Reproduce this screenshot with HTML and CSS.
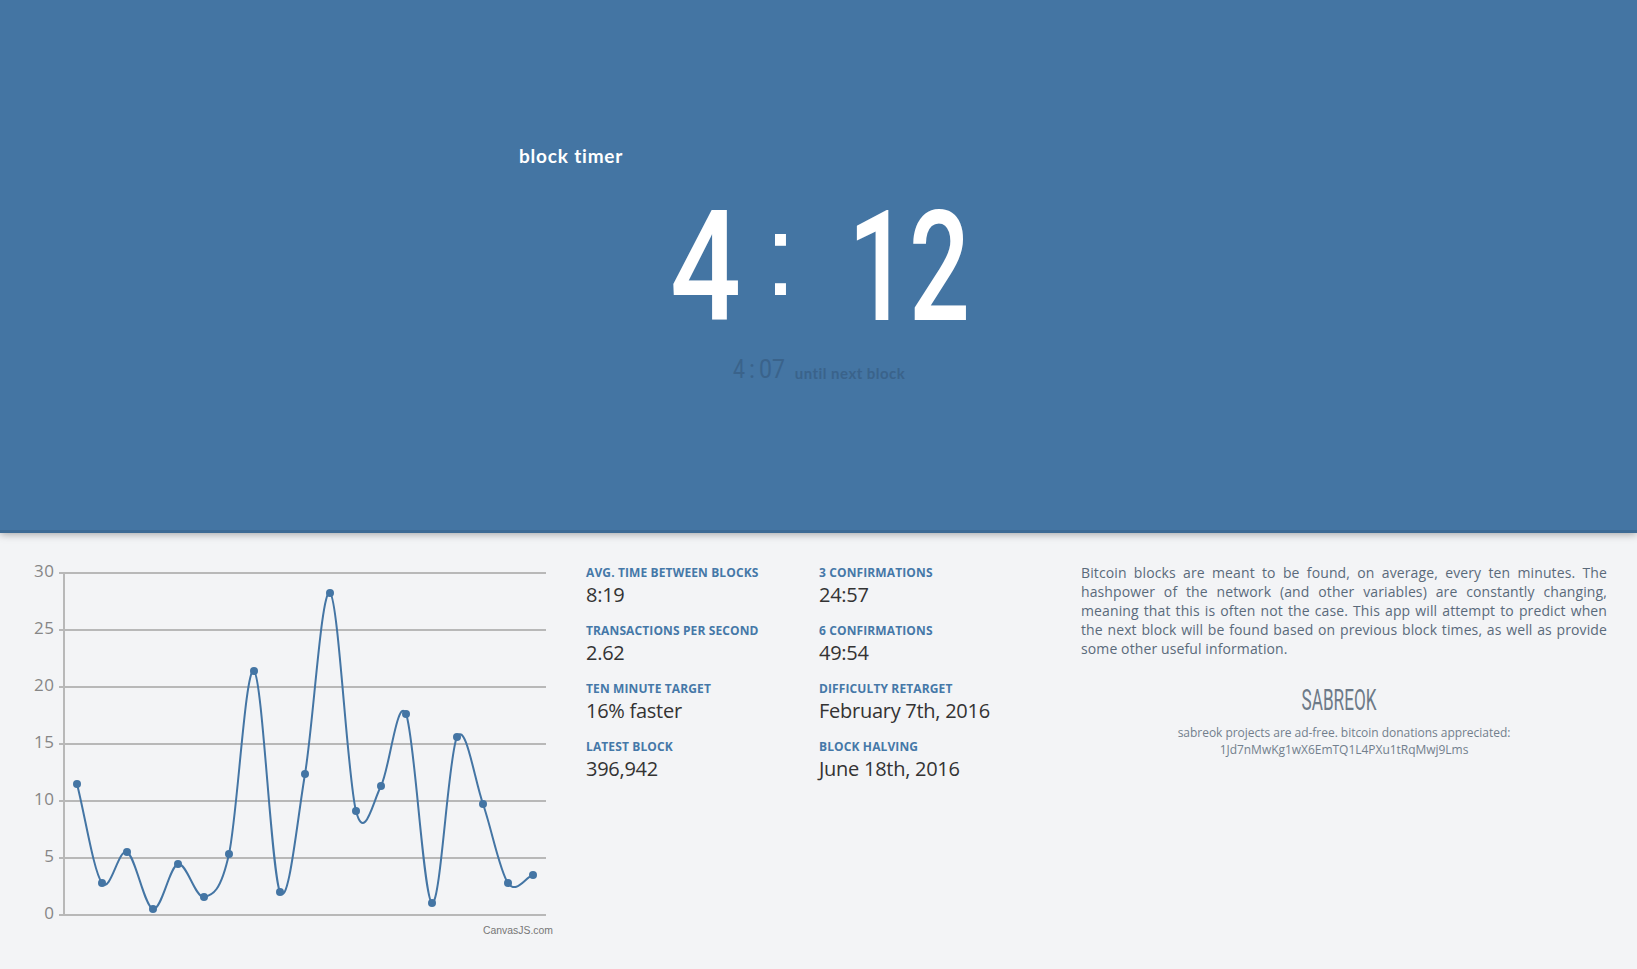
FILE: index.html
```html
<!DOCTYPE html>
<html lang="en">
<head>
<meta charset="utf-8">
<title>block timer</title>
<link rel="stylesheet" href="styles.css">
</head>
<body>
<header class="hero">
  <h1 class="brand">block timer</h1>
  <svg class="clock" width="300" height="120" viewBox="667 205 300 120">
    <text class="digit" x="668" y="320" textLength="71" lengthAdjust="spacingAndGlyphs">4</text>
    <text class="colon" x="762.5" y="295">:</text>
    <text class="digit" x="846" y="320" textLength="122" lengthAdjust="spacingAndGlyphs">12</text>
  </svg>
  <p class="next">
    <svg class="countdown" width="54" height="24" viewBox="732 357 54 24">
      <text x="733" y="378" textLength="12" lengthAdjust="spacingAndGlyphs">4</text>
      <text x="749" y="378">:</text>
      <text x="759" y="378" textLength="26" lengthAdjust="spacingAndGlyphs">07</text>
    </svg>
    <span class="until">until next block</span>
  </p>
</header>
<main class="panel">
  <svg class="chart" width="556" height="400" viewBox="0 549 556 400">
    <g id="axis"></g>
    <g id="series"></g>
    <text class="credit" x="483" y="934" textLength="70" lengthAdjust="spacingAndGlyphs">CanvasJS.com</text>
  </svg>
  <dl class="stats first">
    <dt>AVG. TIME BETWEEN BLOCKS</dt><dd>8:19</dd>
    <dt>TRANSACTIONS PER SECOND</dt><dd>2.62</dd>
    <dt>TEN MINUTE TARGET</dt><dd>16% faster</dd>
    <dt>LATEST BLOCK</dt><dd>396,942</dd>
  </dl>
  <dl class="stats second">
    <dt>3 CONFIRMATIONS</dt><dd>24:57</dd>
    <dt>6 CONFIRMATIONS</dt><dd>49:54</dd>
    <dt>DIFFICULTY RETARGET</dt><dd>February 7th, 2016</dd>
    <dt>BLOCK HALVING</dt><dd>June 18th, 2016</dd>
  </dl>
  <section class="about">
    <p class="intro">Bitcoin blocks are meant to be found, on average, every ten minutes. The hashpower of the network (and other variables) are constantly changing, meaning that this is often not the case. This app will attempt to predict when the next block will be found based on previous block times, as well as provide some other useful information.</p>
    <svg class="sabreok" width="76" height="24" viewBox="0 0 76 24">
      <text x="0.5" y="22.5" textLength="75" lengthAdjust="spacingAndGlyphs">SABREOK</text>
    </svg>
    <p class="donate">sabreok projects are ad-free. bitcoin donations appreciated:<br>1Jd7nMwKg1wX6EmTQ1L4PXu1tRqMwj9Lms</p>
  </section>
</main>
<script src="chart.js"></script>
</body>
</html>
```
FILE: styles.css
```css
* { box-sizing: border-box; }
body { margin: 0; height: 969px; overflow: hidden; background: #f3f4f6; font-family: "Open Sans", sans-serif; }
.hero { height: 533px; padding-top: 143px; background: #4475a3; box-shadow: 0 1px 8px rgba(0,0,0,.35), inset 0 -3px 0 #3d6a94; display: flex; flex-direction: column; align-items: center; }
.brand { margin: 0 0 37px; width: 599px; height: 25px; font: 700 19px/25px Lato, sans-serif; letter-spacing: .8px; color: #fff; }
.clock { display: block; overflow: visible; fill: #fff; }
.digit { font: 500 154px Roboto, sans-serif; }
.colon { font: 115px "Liberation Sans", sans-serif; }
.next { margin: 32px 0 0; display: flex; gap: 9px; height: 28px; color: #3a638b; }
.countdown { overflow: visible; fill: #3a638b; font: 400 25px Roboto, sans-serif; }
.until { font: 700 15px/32px Lato, sans-serif; letter-spacing: .45px; }
.panel { display: flex; padding-top: 16px; }
.chart { flex: none; display: block; overflow: visible; }
.grid { stroke: #b8b8b8; stroke-width: 2; }
.tick { font: 17px "Open Sans", sans-serif; fill: #868686; text-anchor: end; }
.line { fill: none; stroke: #4475a4; stroke-width: 2; }
.dot { fill: #4475a4; }
.credit { font: 10px "Liberation Sans", sans-serif; fill: #777; }
.stats { margin: 15px 0 0; }
.first { margin-left: 30px; width: 233px; }
.second { width: 262px; }
dt { font-weight: 700; font-size: 12px; line-height: 18px; letter-spacing: .12px; color: #4578a8; }
dd { margin: -1px 0 14px; font-size: 20px; line-height: 27px; letter-spacing: -.27px; color: #333; }
.about { width: 526px; padding-top: 14px; display: flex; flex-direction: column; align-items: center; color: #5a6a7b; }
.intro { margin: 0; font-size: 14px; line-height: 19px; letter-spacing: .11px; text-align: justify; }
.sabreok { margin: 29px 10px 0 0; overflow: visible; fill: #6d7a88; font: 400 29px Roboto, sans-serif; }
.donate { margin: 13px 0 0; font-size: 12px; line-height: 17px; text-align: center; letter-spacing: -.03px; color: #727f8d; }
```
FILE: chart.js
```js
const points = [[77,784],[102,883],[127,852],[153,909],[178,864],[204,897],[229,854],[254,671],[280,892],[305,774],[330,593],[356,811],[381,786],[406,714],[432,903],[457,737],[483,804],[508,883],[533,875]];

let axis = '<line class="grid" x1="64" y1="572" x2="64" y2="916"/>';
for (let i = 0; i < 7; i++) {
  const y = 915 - i * 57;
  axis += `<line class="grid" x1="59" y1="${y}" x2="546" y2="${y}"/><text class="tick" x="54" y="${y + 4}" textLength="${i < 2 ? 10 : 20}">${i * 5}</text>`;
}
document.getElementById('axis').innerHTML = axis;

// Smooth curve: each tangent follows the neighbouring points.
const last = points.length - 1;
const tangent = i => {
  const a = points[Math.max(0, i - 1)], b = points[Math.min(last, i + 1)];
  const k = i === 0 || i === last ? 3 : 6;
  return [(b[0] - a[0]) / k, (b[1] - a[1]) / k];
};
let d = `M${points[0]}`;
for (let i = 0; i < last; i++) {
  const p = points[i], q = points[i + 1], s = tangent(i), t = tangent(i + 1);
  d += ` C${p[0] + s[0]},${p[1] + s[1]} ${q[0] - t[0]},${q[1] - t[1]} ${q}`;
}
document.getElementById('series').innerHTML = `<path class="line" d="${d}"/>` +
  points.map(p => `<circle class="dot" cx="${p[0]}" cy="${p[1]}" r="4"/>`).join('');
```
